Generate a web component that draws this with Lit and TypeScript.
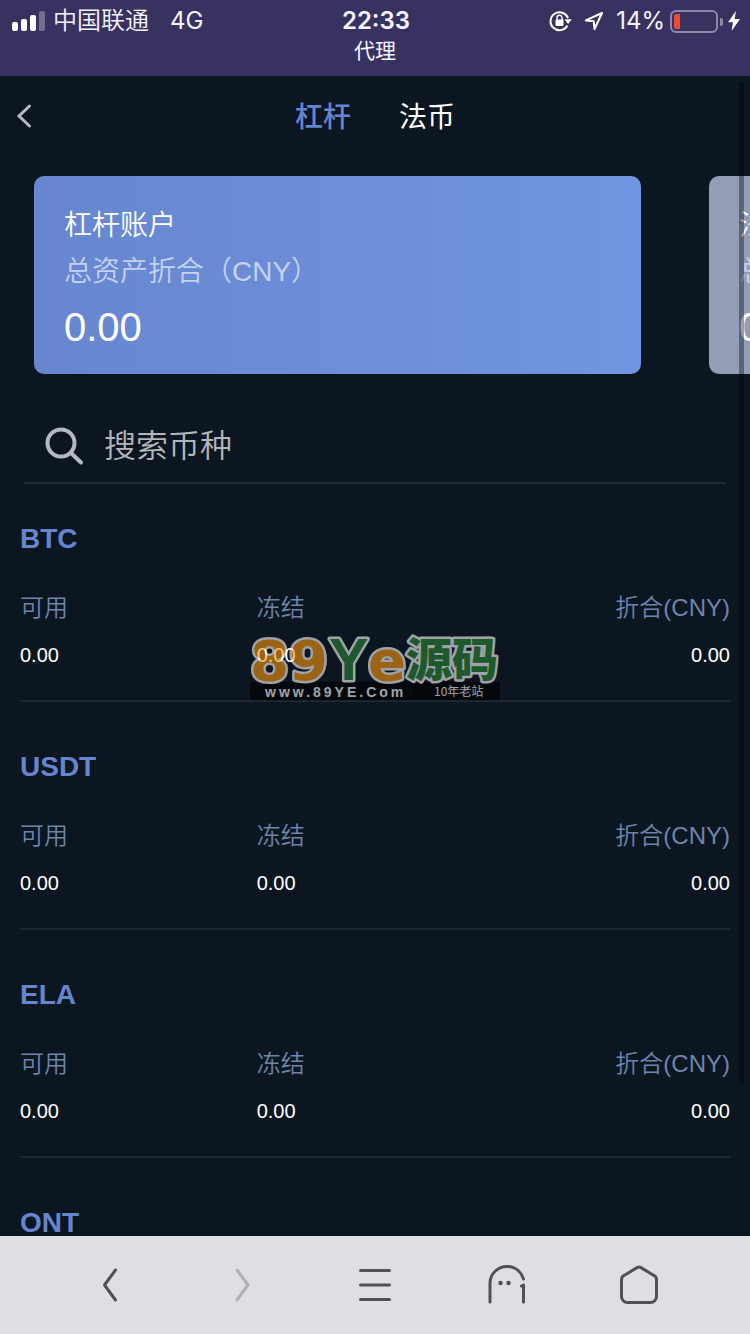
import { LitElement, html, css, svg } from "lit";
import { customElement, property, state } from "lit/decorators.js";
import { classMap } from "lit/directives/class-map.js";

interface Coin {
  name: string;
  available: string;
  frozen: string;
  value: string;
}

const COINS: Coin[] = ["BTC", "USDT", "ELA", "ONT"].map((name) => ({
  name,
  available: "0.00",
  frozen: "0.00",
  value: "0.00",
}));

@customElement("status-bar")
export class StatusBar extends LitElement {
  static styles = css`
    :host {
      display: block;
      background: #383261;
      color: #f7f5ff;
      font-family: Inter, "Noto Sans CJK SC", sans-serif;
      height: 76px;
      flex: none;
    }
    .row {
      display: grid;
      grid-template-columns: 1fr auto 1fr;
      align-items: center;
      height: 40px;
      padding: 0 10px 0 12px;
      font-size: 24px;
      line-height: 42px;
    }
    .side {
      display: flex;
      align-items: center;
      gap: 8px;
    }
    .network {
      margin-left: 13px;
    }
    .carrier {
      font-weight: 350;
    }
    .end {
      justify-content: flex-end;
      gap: 5px;
    }
    .arrow {
      margin: 0 7px;
    }
    .time {
      font-weight: 600;
    }
    .title {
      font-size: 21px;
      line-height: 22px;
      font-weight: 400;
      text-align: center;
    }
    svg {
      display: block;
      flex: none;
    }
  `;

  render() {
    return html`
      <div class="row">
        <div class="side">
          <svg width="33" height="20" viewBox="0 0 33 20" fill="#fff">
            <rect x="0" y="11" width="6" height="9" rx="2" />
            <rect x="9" y="8" width="6" height="12" rx="2" />
            <rect x="18" y="4" width="6" height="16" rx="2" />
            <rect x="27" y="0" width="6" height="20" rx="2" opacity=".3" />
          </svg>
          <span class="carrier">中国联通</span>
          <span class="network">4G</span>
        </div>
        <span class="time">22:33</span>
        <div class="side end">
          <svg width="23" height="22" viewBox="0 0 23 22" fill="none">
            <path d="M18.4 15.6A9 9 0 1 1 19 8.2" stroke="#fff" stroke-width="2" />
            <path d="M15.5 9.2h7.2l-3.6 4.8z" fill="#fff" />
            <rect x="6.5" y="9.5" width="8" height="6.5" rx="1" fill="#fff" />
            <path d="M8 10V7.8a2.5 2.5 0 0 1 5 0V10" stroke="#fff" stroke-width="1.4" />
          </svg>
          <svg class="arrow" width="20" height="20" viewBox="0 0 20 20" fill="none">
            <path d="M18 2 1.8 9.4l8 .9.7 7.9z" stroke="#fff" stroke-width="2" stroke-linejoin="round" />
          </svg>
          <span>14%</span>
          <svg width="53" height="23" viewBox="0 0 53 23" fill="none">
            <rect x="1" y="1" width="46" height="21" rx="5" stroke="#8d88a8" stroke-width="2" />
            <path d="M6 4h4v15H6a2 2 0 0 1-2-2V6a2 2 0 0 1 2-2z" fill="#f04a30" />
            <path d="M50 8a4 4 0 0 1 0 8z" fill="#8d88a8" />
          </svg>
          <svg width="12" height="20" viewBox="0 0 12 20">
            <path d="M8 0 0 11.3h5L3.6 20 12 8H6.6z" fill="#fff" />
          </svg>
        </div>
      </div>
      <div class="title">代理</div>
    `;
  }
}

@customElement("account-card")
export class AccountCard extends LitElement {
  @property() name = "";
  @property() amount = "0.00";
  @property({ type: Boolean, reflect: true }) muted = false;

  static styles = css`
    :host {
      display: block;
      box-sizing: border-box;
      padding: 27px 30px 15px;
      border-radius: 10px;
      background: linear-gradient(90deg, #6786cf, #7195e0);
      color: #fff;
      white-space: nowrap;
      overflow: hidden;
    }
    :host([muted]) {
      background: #939eb6;
    }
    p {
      margin: 0;
      font-size: 28px;
      line-height: 46px;
      font-weight: 350;
    }
    .note {
      color: #c3d2f2;
    }
    .amount {
      font-size: 40px;
      line-height: 64px;
    }
  `;

  render() {
    return html`
      <p>${this.name}</p>
      <p class="note">总资产折合（CNY）</p>
      <p class="amount">${this.amount}</p>
    `;
  }
}

@customElement("coin-item")
export class CoinItem extends LitElement {
  @property({ attribute: false }) coin!: Coin;

  static styles = css`
    :host {
      display: block;
      padding: 35px 0 29px;
      margin: 0 20px 10px;
      border-bottom: 2px solid #1e2836;
    }
    h2 {
      margin: 0 0 33px;
      font-size: 28px;
      line-height: 40px;
      color: #6685cf;
    }
    table {
      width: 100%;
      table-layout: fixed;
      border-collapse: collapse;
    }
    th,
    td {
      padding: 0;
      text-align: left;
      line-height: 32px;
    }
    th {
      font-size: 24px;
      font-weight: 350;
      color: #6f83ab;
      padding-bottom: 15px;
    }
    td {
      font-size: 20px;
      color: #fff;
    }
    .last {
      text-align: right;
    }
  `;

  render() {
    const { name, available, frozen, value } = this.coin;
    return html`
      <h2>${name}</h2>
      <table aria-label=${name}>
        <thead>
          <tr>
            <th scope="col">可用</th>
            <th scope="col">冻结</th>
            <th scope="col" class="last">折合(CNY)</th>
          </tr>
        </thead>
        <tbody>
          <tr>
            <td>${available}</td>
            <td>${frozen}</td>
            <td class="last">${value}</td>
          </tr>
        </tbody>
      </table>
    `;
  }
}

@customElement("site-mark")
export class SiteMark extends LitElement {
  static styles = css`
    :host {
      display: block;
      opacity: 0.6;
      pointer-events: none;
    }
    svg {
      display: block;
    }
    .big {
      font: 700 56px "DejaVu Sans", sans-serif;
      stroke: #fff;
      stroke-width: 5px;
      stroke-linejoin: round;
      paint-order: stroke;
    }
    .slim {
      font-family: "Liberation Sans", sans-serif;
      font-size: 59px;
    }
    .han {
      font-family: "Noto Sans CJK SC", sans-serif;
      font-weight: 900;
      font-size: 46px;
    }
    .orange {
      fill: #fb980c;
    }
    .green {
      fill: #2b8735;
    }
    .url {
      font: 700 14px "Liberation Sans", sans-serif;
      letter-spacing: 3px;
      fill: #fff;
    }
    .age {
      font: 400 12px "Noto Sans CJK SC", sans-serif;
      fill: #fff;
    }
  `;

  render() {
    return html`
      <svg width="250" height="67" viewBox="0 0 250 67">
        <rect y="48" width="250" height="19" fill="#000" />
        ${svg`
          <text class="big orange" x="0" y="46">8</text>
          <text class="big orange" x="39" y="46">9</text>
          <text class="big slim green" x="79" y="46">Y</text>
          <text class="big orange" x="118" y="46">e</text>
          <text class="big han green" x="156" y="42">源码</text>
        `}
        <text class="url" x="15" y="63">www.89YE.Com</text>
        <text class="age" x="184" y="62">10年老站</text>
      </svg>
    `;
  }
}

@customElement("browser-bar")
export class BrowserBar extends LitElement {
  static styles = css`
    :host {
      display: block;
      flex: none;
      background: #dddfe3;
    }
    nav {
      display: flex;
      height: 98px;
      padding: 0 44px;
    }
    button {
      flex: 1;
      display: flex;
      align-items: center;
      justify-content: center;
      padding: 0;
      border: 0;
      background: none;
      color: #505154;
    }
    button:disabled {
      color: #b0b2b6;
    }
    svg {
      fill: none;
      stroke: currentColor;
      stroke-width: 3;
      stroke-linecap: round;
      stroke-linejoin: round;
    }
    .dot {
      fill: currentColor;
      stroke: none;
    }
  `;

  render() {
    return html`
      <nav aria-label="浏览器">
        <button aria-label="后退">
          <svg width="40" height="40"><path d="M25.5 5 14.5 20l11 15" /></svg>
        </button>
        <button aria-label="前进" disabled>
          <svg width="40" height="40"><path d="M14 5 25 20 14 35" /></svg>
        </button>
        <button aria-label="菜单">
          <svg width="40" height="40"><path d="M5.5 5.5h29M5.500 20h29M5.5 34.5h29" /></svg>
        </button>
        <button aria-label="窗口">
          <svg width="40" height="40">
            <path d="M3 37V18.500C3 8.500 11 1.500 20 1.500c8 0 14 5 16.500 12.500M34.500 21l2-1V37" />
            <circle class="dot" cx="13.5" cy="18" r="2.2" />
            <circle class="dot" cx="21.5" cy="18" r="2.2" />
          </svg>
        </button>
        <button aria-label="主页">
          <svg width="40" height="40">
            <path d="M17.5 2.400 4.500 10.200a5 5 0 0 0-3 4.500V31.500a6 6 0 0 0 6 6h23a6 6 0 0 0 6-6V14.700a5 5 0 0 0-3-4.500L20.500 2.400a3 3 0 0 0-3 0z" />
          </svg>
        </button>
      </nav>
    `;
  }
}

@customElement("app-root")
export class AppRoot extends LitElement {
  @state() private tab = 0;

  private tabs = ["杠杆", "法币"];

  static styles = css`
    :host {
      position: relative;
      display: flex;
      flex-direction: column;
      height: 100vh;
      overflow: hidden;
      background: #0c1621;
      color: #fff;
      font-family: "Liberation Sans", "Noto Sans CJK SC", sans-serif;
    }
    main {
      position: relative;
      flex: 1;
      min-height: 0;
      overflow: hidden;
    }
    button {
      padding: 0;
      border: 0;
      background: none;
      color: inherit;
      font: inherit;
    }
    .top {
      display: grid;
      grid-template-columns: 1fr auto 1fr;
      align-items: center;
      height: 80px;
      padding: 0 16px;
    }
    .back {
      justify-self: start;
    }
    .back svg,
    .search svg {
      display: block;
      fill: none;
      stroke: #b4bac4;
      stroke-width: 3;
      stroke-linecap: round;
    }
    .tabs {
      display: flex;
      gap: 48px;
      padding-top: 4px;
      font-size: 28px;
      line-height: 40px;
    }
    .tab.active {
      color: #6685cf;
      font-weight: 500;
    }
    .cards {
      display: flex;
      gap: 68px;
      margin-top: 20px;
      padding-left: 34px;
      overflow: hidden;
    }
    .cards account-card {
      flex: 0 0 calc(100% - 109px);
    }
    .search {
      display: flex;
      align-items: center;
      gap: 20px;
      height: 70px;
      margin: 37px 24px 0;
      padding: 0 0 1px 20px;
      border-bottom: 2px solid #222c38;
    }
    .search input {
      flex: 1;
      min-width: 0;
      padding: 0;
      border: 0;
      outline: 0;
      background: none;
      color: #fff;
      font: inherit;
      font-size: 32px;
      font-weight: 350;
      line-height: 48px;
    }
    .search input::placeholder {
      color: #b5b6b8;
      opacity: 1;
    }
    .search svg {
      stroke-width: 4;
    }
    .thumb {
      position: absolute;
      top: 6px;
      right: 6px;
      width: 5px;
      height: 1002px;
      border-radius: 3px;
      background: rgba(0, 0, 10, 0.38);
    }
    .mark {
      position: absolute;
      top: 50%;
      left: 50%;
      transform: translate(-50%, -50%);
    }
  `;

  render() {
    return html`
      <status-bar></status-bar>
      <main>
        <header class="top">
          <button class="back" aria-label="返回">
            <svg width="16" height="26" viewBox="0 0 16 26">
              <path d="M13.500 3 3 13l10.500 10" />
            </svg>
          </button>
          <div class="tabs">
            ${this.tabs.map(
              (label, i) => html`
                <button
                  class=${classMap({ tab: true, active: i === this.tab })}
                  @click=${() => (this.tab = i)}
                >${label}</button>
              `
            )}
          </div>
        </header>
        <section class="cards">
          <account-card name="杠杆账户"></account-card>
          <account-card name="法币账户" muted></account-card>
        </section>
        <label class="search">
          <svg width="40" height="40" viewBox="0 0 40 40">
            <circle cx="17" cy="17" r="13.5" />
            <path d="m27 27 10 9.5" />
          </svg>
          <input type="search" placeholder="搜索币种" aria-label="搜索币种" />
        </label>
        <section>
          ${COINS.map((coin) => html`<coin-item .coin=${coin}></coin-item>`)}
        </section>
        <div class="thumb"></div>
      </main>
      <browser-bar></browser-bar>
      <site-mark class="mark"></site-mark>
    `;
  }
}
